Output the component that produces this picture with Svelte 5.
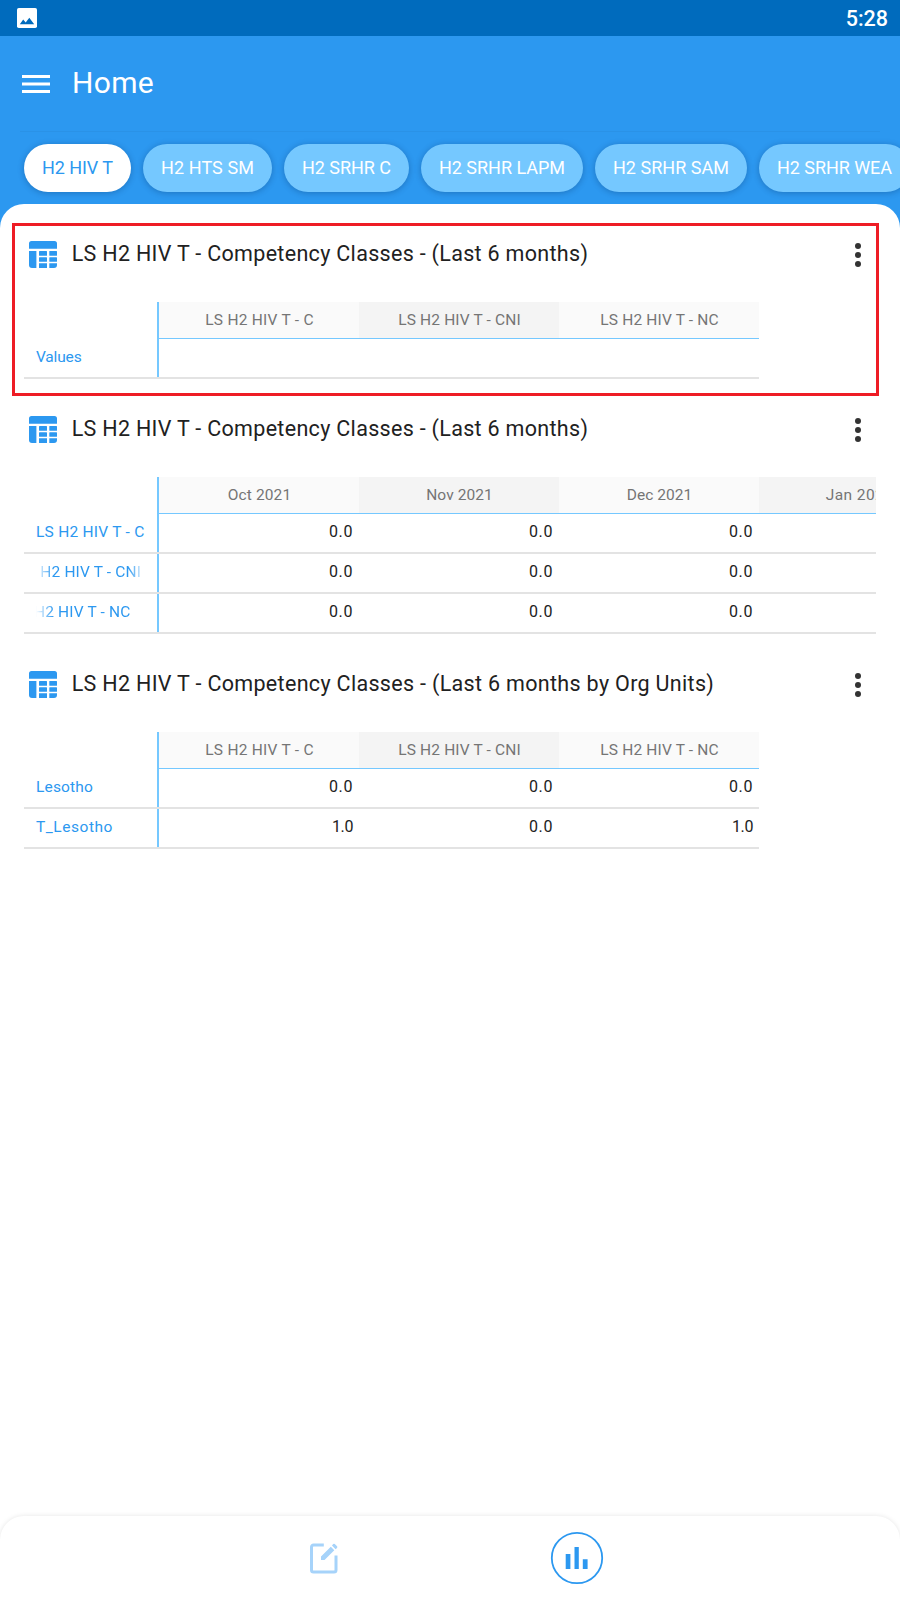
<script>
  const tabs = [
    { label: 'H2 HIV T', w: 71 },
    { label: 'H2 HTS SM', w: 93 },
    { label: 'H2 SRHR C', w: 89 },
    { label: 'H2 SRHR LAPM', w: 126 },
    { label: 'H2 SRHR SAM', w: 116 },
    { label: 'H2 SRHR WEA', w: 115 }
  ];

  const competency = [
    { label: 'LS H2 HIV T - C', w: 108.5 },
    { label: 'LS H2 HIV T - CNI', w: 122.5 },
    { label: 'LS H2 HIV T - NC', w: 118.5 }
  ];

  const cards = [
    {
      title: 'LS H2 HIV T - Competency Classes - (Last 6 months)',
      w: 516.5,
      marked: true,
      columns: competency,
      rows: [{ label: 'Values', w: 45.5, values: ['', '', ''] }]
    },
    {
      title: 'LS H2 HIV T - Competency Classes - (Last 6 months)',
      w: 516.5,
      columns: [
        { label: 'Oct 2021', w: 63.5 },
        { label: 'Nov 2021', w: 66.5 },
        { label: 'Dec 2021', w: 65.5 },
        { label: 'Jan 2022', w: 67.5 }
      ],
      rows: [
        { label: 'LS H2 HIV T - C', w: 108.5, values: ['0.0', '0.0', '0.0', ''] },
        { label: 'LS H2 HIV T - CNI', w: 122.5, scroll: 17.5, values: ['0.0', '0.0', '0.0', ''] },
        { label: 'LS H2 HIV T - NC', w: 118.5, scroll: 24, values: ['0.0', '0.0', '0.0', ''] }
      ]
    },
    {
      title: 'LS H2 HIV T - Competency Classes - (Last 6 months by Org Units)',
      w: 642.5,
      columns: competency,
      rows: [
        { label: 'Lesotho', w: 57, values: ['0.0', '0.0', '0.0'] },
        { label: 'T_Lesotho', w: 77, values: ['1.0', '0.0', '1.0'] }
      ]
    }
  ];

  // Spreads the letters of a label over the given width.
  function fit(node, width) {
    const natural = node.getBoundingClientRect().width;
    const spacing = (width - natural) / node.textContent.length;
    node.style.letterSpacing = `${spacing}px`;
  }
</script>

<div class="screen">
  <div class="status">
    <svg width="20" height="20" viewBox="0 0 20 20">
      <rect width="20" height="20" rx="1.800" fill="#fff" />
      <path d="M2.800 16.200 6.200 11.600 8.700 14.600 12.300 9.800 17.200 16.200z" fill="#006bbd" />
    </svg>
    <time>5:28</time>
  </div>

  <header>
    <div class="bar">
      <svg width="28" height="18" viewBox="0 0 28 18" fill="#fff">
        <rect width="28" height="3" /><rect y="7.5" width="28" height="3" /><rect y="15" width="28" height="3" />
      </svg>
      <h1><span use:fit={82}>Home</span></h1>
    </div>
    <nav class="tabs">
      {#each tabs as tab, i}
        <button class:active={i === 0}><span use:fit={tab.w}>{tab.label}</span></button>
      {/each}
    </nav>
  </header>

  <main>
    {#each cards as card}
      <section>
        {#if card.marked}<div class="marker"></div>{/if}
        <div class="heading">
          <svg class="grid-icon" width="28" height="27" viewBox="0 0 28 27" fill="#2c98f0">
            <path d="M2.500 0h23A2.500 2.500 0 0 1 28 2.500V7.700H0V2.500A2.500 2.500 0 0 1 2.500 0z" />
            <path d="M0 10H7.400V27H3A3 3 0 0 1 0 24z" />
            <rect x="10" y="10" width="8" height="4.700" rx=".5" />
            <rect x="20.300" y="10" width="7.700" height="4.700" rx=".5" />
            <rect x="10" y="16.200" width="8" height="4.500" rx=".5" />
            <rect x="20.300" y="16.200" width="7.700" height="4.500" rx=".5" />
            <path d="M10 22.200h8V27h-8zM20.300 22.200H28V24A3 3 0 0 1 25 27h-4.700z" />
          </svg>
          <h2><span use:fit={card.w}>{card.title}</span></h2>
          <svg class="more" width="6" height="24" viewBox="0 0 6 24" fill="#333">
            <circle cx="3" cy="3" r="3" /><circle cx="3" cy="12" r="3" /><circle cx="3" cy="21" r="3" />
          </svg>
        </div>
        <div class="table">
          <div class="line head">
            <div class="label"></div>
            {#each card.columns as column}
              <div class="cell"><span use:fit={column.w}>{column.label}</span></div>
            {/each}
          </div>
          {#each card.rows as row}
            <div class="line">
              <div class="label">
                <div class="window" class:faded={row.scroll}>
                  <span use:fit={row.w} style:margin-left="{-(row.scroll ?? 0)}px">{row.label}</span>
                </div>
              </div>
              {#each row.values as value}
                <div class="cell value">{#if value}<span use:fit={value === '1.0' ? 21 : 24}>{value}</span>{/if}</div>
              {/each}
            </div>
          {/each}
        </div>
      </section>
    {/each}
  </main>

  <div class="dock">
    <footer>
      <svg width="30" height="32" viewBox="0 0 30 32" fill="none">
        <path d="M14.800 3H4.500A2 2 0 0 0 2.500 5V28a2 2 0 0 0 2 2H25a2 2 0 0 0 2-2V13.500" stroke="#a6d3fa" stroke-width="3" />
        <path d="M12 14.500 21.800 4.700 25.300 8.200 15.500 18H12zM23 3.500 24.200 2.100q.8-.8 1.600 0L28 4.300q.8.800 0 1.600L26.600 7.200z" fill="#a6d3fa" />
      </svg>
      <svg width="54" height="54" viewBox="0 0 54 54">
        <circle cx="27" cy="27" r="25.200" fill="none" stroke="#2c98f0" stroke-width="1.800" />
        <path d="M15.700 23h4.700v15h-4.700zM24.500 16h4.300v22h-4.300zM32.800 28.200h4.800V38h-4.800z" fill="#2c98f0" />
      </svg>
    </footer>
  </div>
</div>

<style>
  :global(body) { margin: 0; }
  .screen {
    width: 900px;
    height: 1600px;
    display: flex;
    flex-direction: column;
    overflow: hidden;
    background: #2c98f0;
    font-family: Roboto, "Liberation Sans", sans-serif;
  }
  svg { display: block; flex: none; }
  span { display: inline-block; white-space: nowrap; }
  .status {
    height: 36px;
    flex: none;
    box-sizing: border-box;
    padding: 0 12px 0 17px;
    display: flex;
    align-items: center;
    justify-content: space-between;
    background: #006bbd;
    color: #fff;
  }
  time { font-size: 21.500px; font-weight: 500; line-height: 24px; padding-top: 1px; }
  header { height: 168px; flex: none; }
  .bar {
    height: 95px;
    display: flex;
    align-items: center;
    gap: 22px;
    margin: 0 20px;
    padding-left: 2px;
    border-bottom: 1px solid #2a92e7;
    color: #fff;
  }
  h1 { margin: -2px 0 0; font-size: 30px; font-weight: 400; line-height: 36px; }
  .tabs { display: flex; gap: 12px; padding: 12px 0 12px 24px; }
  button {
    flex: none;
    height: 48px;
    padding: 0 18px;
    border: 0;
    border-radius: 24px;
    background: #75c8ff;
    color: #fff;
    font: 400 18px/48px Roboto, "Liberation Sans", sans-serif;
    box-shadow: 0 1px 6px rgba(0, 40, 90, 0.32);
  }
  button.active { background: #fff; color: #2c98f0; }
  main {
    flex: 1;
    min-height: 0;
    box-sizing: border-box;
    padding: 24px 24px 0;
    background: #fff;
    border-radius: 24px 24px 0 0;
  }
  section { position: relative; padding-bottom: 24px; }
  .marker {
    position: absolute;
    left: -12px;
    top: -5px;
    width: 861px;
    height: 167px;
    border: 3px solid #ee1c25;
  }
  .heading { height: 74px; display: flex; align-items: flex-start; }
  .grid-icon { margin: 13px 0 0 4.700px; }
  h2 { flex: 1; margin: 12px 0 0 15px; font-size: 21.500px; line-height: 27px; font-weight: 400; color: #212121; }
  .more { margin: 15px 15px 0 0; }
  .table { overflow: hidden; font-size: 15.500px; color: #212121; }
  .line { display: flex; width: max-content; height: 38px; line-height: 36px; border-bottom: 2px solid #e3e3e3; }
  .label { width: 135px; box-sizing: border-box; padding: 0 12px; border-right: 2px solid #75c8ff; color: #2c98f0; }
  .window { overflow: hidden; width: 110px; height: 36px; }
  .faded { mask-image: linear-gradient(to right, transparent, #000 18px, #000 92px, transparent); }
  .cell { width: 200px; box-sizing: border-box; text-align: right; }
  .value { padding-right: 6px; font-size: 16px; }
  .head { height: 37px; border-bottom: 0; }
  .head .cell {
    padding-left: 1px;
    text-align: center;
    background: #fafafa;
    color: #757575;
    border-bottom: 1px solid #75c8ff;
  }
  .head .cell:nth-child(odd) { background: #f4f4f4; }
  .dock { flex: none; background: #fff; }
  footer {
    height: 84px;
    box-sizing: border-box;
    display: flex;
    align-items: flex-start;
    gap: 211px;
    padding: 15px 0 0 308.500px;
    border-radius: 24px 24px 0 0;
    background: #fff;
    box-shadow: 0 0 5px rgba(0, 0, 0, 0.1);
  }
  footer svg:first-child { margin-top: 10.500px; }
</style>
